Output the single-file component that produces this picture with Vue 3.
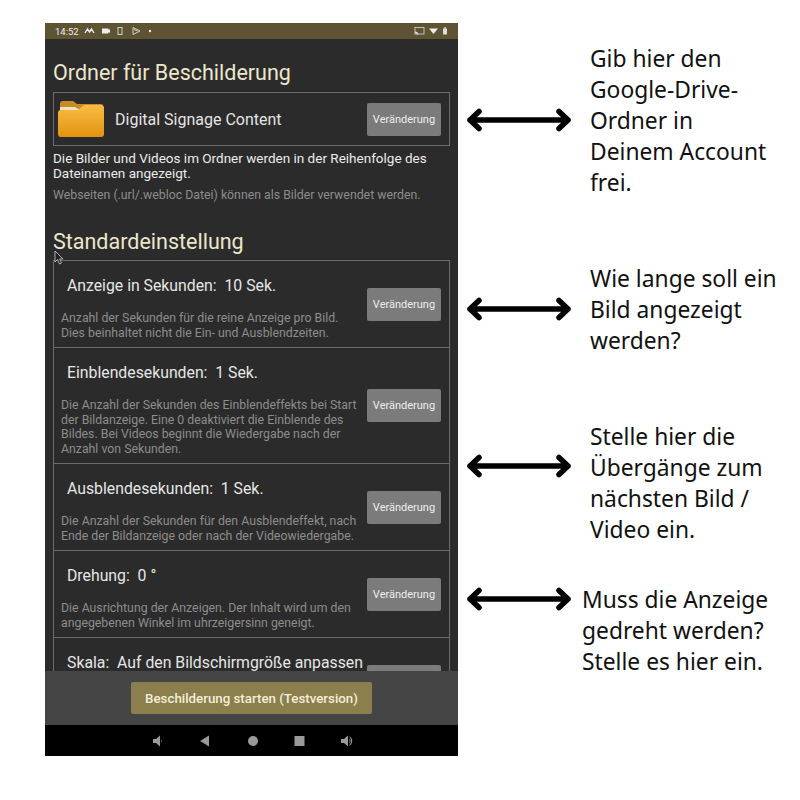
<script setup>
const rows = [
  { title: 'Anzeige in Sekunden:  10 Sek.', desc: 'Anzahl der Sekunden für die reine Anzeige pro Bild.\nDies beinhaltet nicht die Ein- und Ausblendzeiten.', cls: 'r1', label: 'Veränderung' },
  { title: 'Einblendesekunden:  1 Sek.', desc: 'Die Anzahl der Sekunden des Einblendeffekts bei Start\nder Bildanzeige. Eine 0 deaktiviert die Einblende des\nBildes. Bei Videos beginnt die Wiedergabe nach der\nAnzahl von Sekunden.', cls: 'r2', label: 'Veränderung' },
  { title: 'Ausblendesekunden:  1 Sek.', desc: 'Die Anzahl der Sekunden für den Ausblendeffekt, nach\nEnde der Bildanzeige oder nach der Videowiedergabe.', cls: 'r3', label: 'Veränderung' },
  { title: 'Drehung:  0 °', desc: 'Die Ausrichtung der Anzeigen. Der Inhalt wird um den\nangegebenen Winkel im uhrzeigersinn geneigt.', cls: 'r4', label: 'Veränderung' },
  { title: 'Skala:  Auf den Bildschirmgröße anpassen', desc: '', cls: 'r5', label: '' },
]
const notes = [
  { text: 'Gib hier den\nGoogle-Drive-\nOrdner in\nDeinem Account\nfrei.', cls: 'n1' },
  { text: 'Wie lange soll ein\nBild angezeigt\nwerden?', cls: 'n2' },
  { text: 'Stelle hier die\nÜbergänge zum\nnächsten Bild /\nVideo ein.', cls: 'n3' },
  { text: 'Muss die Anzeige\ngedreht werden?\nStelle es hier ein.', cls: 'n4' },
]
</script>

<template>
  <div class="page">
    <div class="phone">
      <div class="status">
        <span class="time">14:52</span>
        <svg class="st" width="70" height="10" viewBox="0 0 70 10">
          <path d="M1 7 3.500 3 5.500 6 7.500 3 10 7" fill="none" stroke="#eee" stroke-width="1.400"/>
          <path d="M18 2.500h6.500v5H18zM24.500 4l1.500-1v4l-1.500-1z" fill="#eee"/>
          <rect x="34" y="1.500" width="4" height="7" fill="none" stroke="#ddd" stroke-width=".9"/>
          <path d="M49 1.500 56 5 49 8.500zM50 3.500 53.500 5" fill="none" stroke="#ddd" stroke-width=".9"/>
          <circle cx="66" cy="5" r="1.200" fill="#eee"/>
        </svg>
        <span class="grow"></span>
        <svg width="38" height="10" viewBox="0 0 38 10">
          <rect x="3" y="1.500" width="9" height="6.500" fill="none" stroke="#ccc" stroke-width=".9"/>
          <path d="M3 5.500Q6 5.500 6.500 8.500H5Q4.500 7 3 7Z" fill="#ddd"/>
          <path d="M17 2.500h9L21.500 8z" fill="#eee"/>
          <rect x="31" y="2.500" width="4" height="6" fill="#ddd"/>
          <rect x="32" y="1.300" width="2" height="1.200" fill="#ddd"/>
        </svg>
      </div>

      <div class="content">
        <h2 class="h1">Ordner für Beschilderung</h2>
        <div class="folder-box">
          <svg class="folder" width="48" height="38" viewBox="0 0 48 38">
            <defs>
              <linearGradient id="fg" x1="0" y1="0" x2="0" y2="1">
                <stop offset="0" stop-color="#f8bd45"/>
                <stop offset="1" stop-color="#e3930f"/>
              </linearGradient>
            </defs>
            <path d="M3 4 Q3 1 6 1H16L20 4H44Q46 4 46 6V12H3Z" fill="#c98c24"/>
            <path d="M3 7H18L23 10H46V12H3Z" fill="#eee3c4"/>
            <path d="M1 13 Q1 10 4 10H21L27 5H44Q47 5 47 8V34Q47 37 44 37H4Q1 37 1 34Z" fill="url(#fg)"/>
          </svg>
          <span class="folder-name">Digital Signage Content</span>
          <span class="grow"></span>
          <button class="btn">Veränderung</button>
        </div>
        <p class="info">Die Bilder und Videos im Ordner werden in der Reihenfolge des<br>Dateinamen angezeigt.</p>
        <p class="hint">Webseiten (.url/.webloc Datei) können als Bilder verwendet werden.</p>
        <h2 class="h2">Standardeinstellung</h2>
        <svg class="cursor" width="11" height="15" viewBox="0 0 11 15">
          <path d="M1 1V12L3.500 9.500 5.500 14 7.500 13 5.500 9H9Z" fill="#222" stroke="#ccc" stroke-width=".8"/>
        </svg>
        <div class="settings">
          <div v-for="r in rows" :key="r.title" class="row" :class="r.cls">
            <div class="row-text">
              <div class="row-title">{{ r.title }}</div>
              <div v-if="r.desc" class="row-desc">{{ r.desc }}</div>
            </div>
            <button class="btn">{{ r.label }}</button>
          </div>
        </div>
      </div>

      <div class="actions">
        <button class="start">Beschilderung starten (Testversion)</button>
      </div>

      <div class="nav">
        <svg width="210" height="14" viewBox="0 0 210 14">
          <g fill="#9a9a9a">
            <path d="M6 5H9L13 1.500V12.500L9 9H6Z"/>
            <path d="M14.500 5.500Q16 7 14.500 8.500Z"/>
            <path d="M53 7 62 1.500V12.500Z"/>
            <circle cx="106" cy="7" r="5"/>
            <rect x="147.500" y="2" width="10" height="10"/>
            <path d="M194 5H197L201 1.500V12.500L197 9H194Z"/>
            <path d="M202.500 4.500Q204.500 7 202.500 9.500Z"/>
            <path d="M202.500 2Q208 7 202.500 12L202.500 10.800Q205.800 7 202.500 3.200Z"/>
          </g>
        </svg>
      </div>
    </div>

    <div class="side">
      <div v-for="n in notes" :key="n.cls" class="note" :class="n.cls">
        <svg class="arrow" width="106" height="24" viewBox="0 0 106 24">
          <path d="M4 12H102M13 3.500 4 12 13 20.500M93 3.500 102 12 93 20.500" fill="none" stroke="#000" stroke-width="5.500" stroke-linecap="round" stroke-linejoin="round"/>
        </svg>
        <div class="note-text">{{ n.text }}</div>
      </div>
    </div>
  </div>
</template>

<style>
html, body { margin: 0; background: #fff; }
</style>

<style scoped>
.page {
  width: 800px;
  height: 800px;
  box-sizing: border-box;
  padding: 23px 0 0 45px;
  display: flex;
  background: #fff;
  overflow: hidden;
  font-family: Roboto, "Liberation Sans", sans-serif;
}
.phone {
  width: 413px;
  height: 733px;
  display: flex;
  flex-direction: column;
  flex: none;
  background: #2b2b2b;
}
.status {
  height: 16px;
  flex: none;
  background: #5e5434;
  display: flex;
  align-items: center;
  padding: 0 8px 0 10px;
  color: #eee;
  font-size: 9.500px;
}
.st { margin-left: 5px; }
.grow { flex: 1; }
.content {
  flex: 1;
  min-height: 0;
  overflow: hidden;
  position: relative;
  padding: 0 8px;
}
.h1, .h2 {
  margin: 0;
  font-weight: 400;
  font-size: 21.500px;
  line-height: 26px;
  color: #ece6cd;
}
.h1 { padding-top: 21px; }
.h2 { margin-top: 26px; }
.folder-box {
  margin-top: 6px;
  height: 52px;
  border: 1px solid #6c6c6c;
  display: flex;
  align-items: center;
  padding: 0 8px 0 3px;
}
.folder { flex: none; }
.folder-name {
  margin-left: 10px;
  color: #e4e4e4;
  font-size: 16px;
}
.btn {
  flex: none;
  width: 74px;
  height: 33px;
  padding: 0;
  border: 0;
  border-radius: 2px;
  background: #7b7b7b;
  color: #eee;
  font: 400 11px Roboto, sans-serif;
}
.info {
  margin: 5px 0 0;
  font-size: 13.500px;
  line-height: 15px;
  color: #ececec;
}
.hint {
  margin: 6px 0 0;
  font-size: 12.300px;
  line-height: 16px;
  color: #8d8d8d;
}
.cursor {
  position: absolute;
  left: 9px;
  top: 211px;
}
.settings {
  margin-top: 5px;
  border: 1px solid #6c6c6c;
  border-bottom: 0;
}
.row {
  display: flex;
  align-items: center;
  padding: 0 8px 0 7px;
  border-bottom: 1px solid #6c6c6c;
  box-sizing: border-box;
}
.r1 { height: 87px; }
.r2 { height: 116px; }
.r3 { height: 87px; }
.r4 { height: 87px; }
.r5 { height: 87px; }
.row-text { flex: 1; min-width: 0; align-self: flex-start; }
.row-title {
  margin-top: 16px;
  padding-left: 6px;
  font-size: 15.800px;
  line-height: 18px;
  color: #e6e6e6;
  white-space: pre;
}
.row-desc {
  margin-top: 16px;
  font-size: 12.300px;
  line-height: 14.500px;
  color: #8d8d8d;
  white-space: pre;
}
.actions {
  height: 54px;
  flex: none;
  background: #454545;
  display: flex;
  align-items: center;
  justify-content: center;
}
.start {
  width: 241px;
  height: 32px;
  padding: 0;
  border: 0;
  border-radius: 2px;
  background: #8c7f4e;
  color: #f2eed8;
  font: 500 13.300px Roboto, sans-serif;
}
.nav {
  height: 31px;
  flex: none;
  background: #000;
  display: flex;
  align-items: center;
  justify-content: center;
}
.side {
  margin-left: 8px;
  padding-top: 19.500px;
  display: flex;
  flex-direction: column;
  flex: none;
  width: 332px;
}
.note {
  display: flex;
  align-items: center;
}
.arrow { flex: none; margin-left: 0; }
.note-text {
  margin-left: 18px;
  font-family: "Noto Sans", Lato, sans-serif;
  font-size: 22.800px;
  line-height: 31px;
  color: #111;
  white-space: pre;
}
.n2 { margin-top: 65px; }
.n3 { margin-top: 65px; align-items: flex-start; }
.n3 .arrow { margin-top: 33px; }
.n4 { margin-top: 39px; align-items: flex-start; }
.n4 .note-text { margin-left: 10px; }
.n4 .arrow { margin-top: 3px; }
</style>
